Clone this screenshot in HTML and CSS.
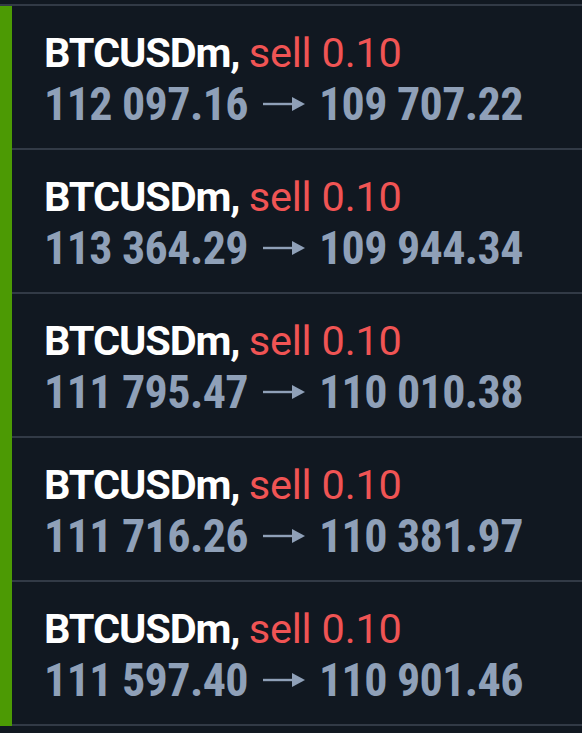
FILE: index.html
```html
<!DOCTYPE html>
<html lang="en">
<head>
    <meta charset="UTF-8">
    <meta name="viewport" content="width=device-width, initial-scale=1.0">
    <title>Deals</title>
    <link rel="stylesheet" href="styles.css">
</head>
<body>
    <div class="deals">
        <div class="marker"></div>
        <ul class="deal-list">
            <li class="deal">
                <div class="deal-title">BTCUSDm, <span class="side">sell 0.10</span></div>
                <div class="deal-prices">
                    <span>112 097.16</span>
                    <svg class="arrow" viewBox="0 0 42 14"><rect x="0" y="5.8" width="31" height="2.4"/><path d="M29 0 L42 7 L29 14 Z"/></svg>
                    <span>109 707.22</span>
                </div>
            </li>
            <li class="deal">
                <div class="deal-title">BTCUSDm, <span class="side">sell 0.10</span></div>
                <div class="deal-prices">
                    <span>113 364.29</span>
                    <svg class="arrow" viewBox="0 0 42 14"><rect x="0" y="5.8" width="31" height="2.4"/><path d="M29 0 L42 7 L29 14 Z"/></svg>
                    <span>109 944.34</span>
                </div>
            </li>
            <li class="deal">
                <div class="deal-title">BTCUSDm, <span class="side">sell 0.10</span></div>
                <div class="deal-prices">
                    <span>111 795.47</span>
                    <svg class="arrow" viewBox="0 0 42 14"><rect x="0" y="5.8" width="31" height="2.4"/><path d="M29 0 L42 7 L29 14 Z"/></svg>
                    <span>110 010.38</span>
                </div>
            </li>
            <li class="deal">
                <div class="deal-title">BTCUSDm, <span class="side">sell 0.10</span></div>
                <div class="deal-prices">
                    <span>111 716.26</span>
                    <svg class="arrow" viewBox="0 0 42 14"><rect x="0" y="5.8" width="31" height="2.4"/><path d="M29 0 L42 7 L29 14 Z"/></svg>
                    <span>110 381.97</span>
                </div>
            </li>
            <li class="deal">
                <div class="deal-title">BTCUSDm, <span class="side">sell 0.10</span></div>
                <div class="deal-prices">
                    <span>111 597.40</span>
                    <svg class="arrow" viewBox="0 0 42 14"><rect x="0" y="5.8" width="31" height="2.4"/><path d="M29 0 L42 7 L29 14 Z"/></svg>
                    <span>110 901.46</span>
                </div>
            </li>
        </ul>
    </div>
</body>
</html>
```

FILE: styles.css
```css
body {
    margin: 0;
    padding-top: 4px;
    background-color: #111821;
    font-family: Roboto, 'Noto Sans', sans-serif;
    overflow: hidden;
}
.deals {
    display: flex;
    border-top: 2px solid #323a46;
}
.marker {
    width: 12px;
    flex-shrink: 0;
    background-color: #4c9a04;
}
.deal-list {
    flex: 1;
    list-style: none;
    margin: 0;
    padding: 0;
}
.deal {
    height: 144px;
    box-sizing: border-box;
    padding: 23px 0 0 32px;
    border-bottom: 2px solid #323a46;
}
.deal-title {
    font-size: 41.5px;
    line-height: 48px;
    font-weight: bold;
    letter-spacing: -1.1px;
    color: #ffffff;
    white-space: nowrap;
}
.side {
    font-weight: normal;
    letter-spacing: -0.2px;
    color: #f05454;
}
.deal-prices {
    display: flex;
    align-items: center;
    font-size: 46px;
    line-height: 55px;
    font-weight: bold;
    font-stretch: condensed;
    letter-spacing: -0.6px;
    color: #8fa0b8;
    white-space: nowrap;
}
.arrow {
    width: 42px;
    height: 14px;
    margin: 0 14px 2px 15px;
    fill: #8fa0b8;
}
```
